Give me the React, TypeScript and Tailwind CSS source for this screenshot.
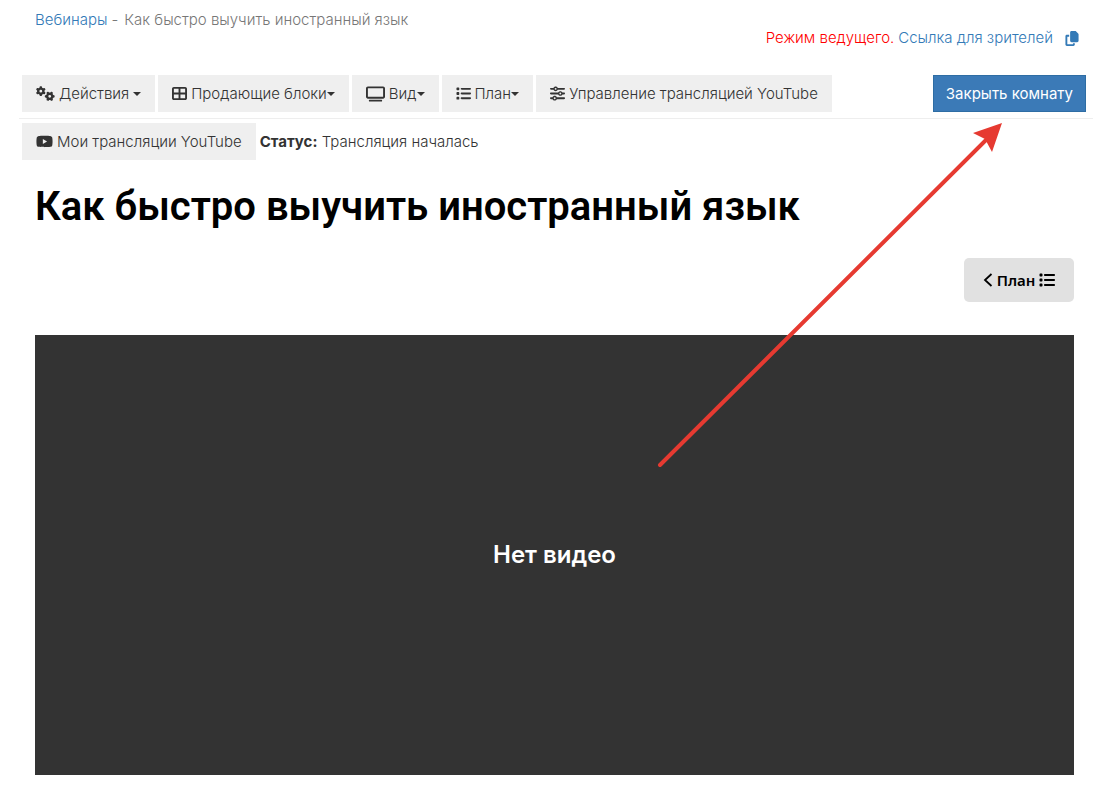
import React from 'react';
import {
  FaAngleLeft,
  FaCopy,
  FaGears,
  FaList,
  FaSliders,
  FaTableCellsLarge,
  FaTv,
  FaYoutube,
} from 'react-icons/fa6';

type ToolButtonProps = {
  icon: React.ReactNode;
  label: string;
  caret?: boolean;
  spaced?: boolean;
};

const Caret: React.FC<{ className?: string }> = ({ className = '' }) => (
  <svg className={`h-1 w-2 ${className}`} viewBox="0 0 8 4" fill="currentColor" aria-hidden="true">
    <path d="M0 0H8L4 4Z" />
  </svg>
);

const ToolButton: React.FC<ToolButtonProps> = ({ icon, label, caret, spaced }) => (
  <button
    type="button"
    className="flex h-[37px] items-center whitespace-nowrap bg-[#efefef] px-3.5 text-[#333]"
  >
    {icon}
    <span className="ml-1">{label}</span>
    {caret && <Caret className={spaced ? 'ml-1' : ''} />}
  </button>
);

const TopBar: React.FC = () => (
  <header className="flex justify-between pl-[35px] pr-3.5 pt-2">
    <nav className="flex h-6 items-center text-[#777]">
      <a href="#webinars" className="text-[#337ab7]">Вебинары</a>
      <span className="ml-1">-</span>
      <span className="ml-1.5">Как быстро выучить иностранный язык</span>
    </nav>
    <div className="mt-[18px] flex h-6 items-center">
      <span className="text-[#f00]">Режим ведущего.</span>
      <a href="#viewers" className="ml-1 text-[#337ab7]">Ссылка для зрителей</a>
      <button type="button" aria-label="Скопировать ссылку" className="ml-3 text-[#337ab7]">
        <FaCopy className="h-[15px] w-3.5" />
      </button>
    </div>
  </header>
);

const Toolbar: React.FC = () => (
  <div className="mt-[25px]">
    <div className="ml-[19px] flex items-center justify-between border-b border-[#eee] pb-1.5 pl-[3px] pr-[7px]">
      <div className="flex gap-[3px]">
        <ToolButton icon={<FaGears className="h-[15px] w-[19px]" />} label="Действия" caret spaced />
        <ToolButton icon={<FaTableCellsLarge className="size-[15px]" />} label="Продающие блоки" caret />
        <ToolButton icon={<FaTv className="h-4 w-[19px]" />} label="Вид" caret />
        <ToolButton icon={<FaList className="size-[15px]" />} label="План" caret />
        <ToolButton icon={<FaSliders className="size-[15px]" />} label="Управление трансляцией YouTube" />
      </div>
      <button
        type="button"
        className="h-[37px] border border-[#2e6da4] bg-[#3b7ab7] px-3 font-normal text-white"
      >
        Закрыть комнату
      </button>
    </div>
    <div className="ml-[22px] mt-1 flex items-center gap-1 text-[#333]">
      <ToolButton icon={<FaYoutube className="size-[17px]" />} label="Мои трансляции YouTube" />
      <p>
        <b className="font-bold">Статус:</b> Трансляция началась
      </p>
    </div>
  </div>
);

// Pointer from the video area up to the close button
const Arrow: React.FC = () => (
  <svg
    className="pointer-events-none absolute right-[90px] top-[122px] h-[346px] w-[347px]"
    viewBox="656 122 347 346"
    fill="none"
    aria-hidden="true"
  >
    <path d="M660 465L988 138" stroke="#e63a31" strokeWidth="4" strokeLinecap="round" />
    <path d="M1002 123L973 133L985 139L992 152Z" fill="#e63a31" />
  </svg>
);

export default function App() {
  return (
    <div className="relative bg-white pb-4 font-['Inter','Liberation_Sans',sans-serif] text-[15px] font-light leading-6">
      <TopBar />
      <Toolbar />
      <main className="pl-[35px] pr-[19px]">
        <h1 className="mt-[22px] font-['Roboto',sans-serif] text-[40px] font-semibold leading-[50px] text-black">
          Как быстро выучить иностранный язык
        </h1>
        <div className="mt-[26px] flex justify-end">
          <button
            type="button"
            className="flex h-11 w-[110px] items-center justify-center gap-1 rounded-[5px] bg-[#e1e1e1] font-['Noto_Sans',sans-serif] text-[15px] font-semibold text-black"
          >
            <svg className="h-3.5 w-2.5" viewBox="0 0 10 14" fill="none" stroke="currentColor" strokeWidth="1.8" aria-hidden="true">
              <path d="M8.5 1L2 7L8.5 13" />
            </svg>
            План
            <FaList className="size-4" />
          </button>
        </div>
        <section className="mt-[33px] flex h-[440px] items-center justify-center bg-[#333]">
          <p className="text-2xl font-semibold text-white">Нет видео</p>
        </section>
      </main>
      <Arrow />
    </div>
  );
}
